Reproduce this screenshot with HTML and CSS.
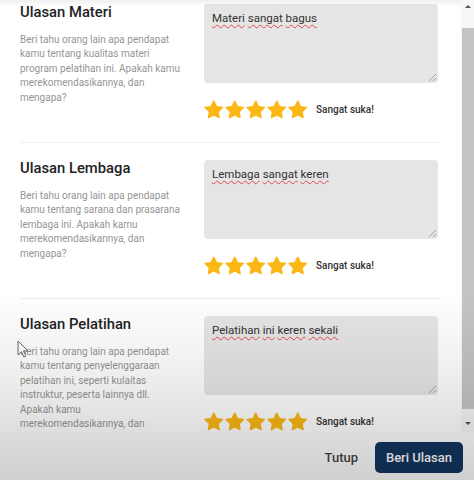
FILE: index.html
```html
<!DOCTYPE html>
<html lang="id">
<head>
    <meta charset="UTF-8">
    <meta name="viewport" content="width=device-width, initial-scale=1.0">
    <title>Beri Ulasan</title>
    <link rel="stylesheet" href="styles.css">
</head>
<body>
    <svg width="0" height="0" style="position:absolute">
        <symbol id="star" viewBox="1.6 2 20.8 19.6">
            <path d="M12 2.9l2.9 5.8 6.4.95-4.65 4.5 1.1 6.4L12 17.5l-5.75 3.05 1.1-6.4L2.7 9.65l6.4-.95z"/>
        </symbol>
    </svg>

    <div class="modal">
        <div class="modal-body">
            <div class="reviews">
                <div class="review-list">
                    <section class="review">
                        <div class="info">
                            <h2>Ulasan Materi</h2>
                            <p>Beri tahu orang lain apa pendapat kamu tentang kualitas materi program pelatihan ini. Apakah kamu merekomendasikannya, dan mengapa?</p>
                        </div>
                        <div class="answer">
                            <div class="field"><span class="typo">Materi</span> <span class="typo">sangat</span> <span class="typo">bagus</span></div>
                            <div class="rating">
                                <svg class="star"><use href="#star"/></svg>
                                <svg class="star"><use href="#star"/></svg>
                                <svg class="star"><use href="#star"/></svg>
                                <svg class="star"><use href="#star"/></svg>
                                <svg class="star"><use href="#star"/></svg>
                                <span class="rating-label">Sangat suka!</span>
                            </div>
                        </div>
                    </section>

                    <section class="review">
                        <div class="info">
                            <h2>Ulasan Lembaga</h2>
                            <p>Beri tahu orang lain apa pendapat kamu tentang sarana dan prasarana lembaga ini. Apakah kamu merekomendasikannya, dan mengapa?</p>
                        </div>
                        <div class="answer">
                            <div class="field"><span class="typo">Lembaga</span> <span class="typo">sangat</span> <span class="typo">keren</span></div>
                            <div class="rating">
                                <svg class="star"><use href="#star"/></svg>
                                <svg class="star"><use href="#star"/></svg>
                                <svg class="star"><use href="#star"/></svg>
                                <svg class="star"><use href="#star"/></svg>
                                <svg class="star"><use href="#star"/></svg>
                                <span class="rating-label">Sangat suka!</span>
                            </div>
                        </div>
                    </section>

                    <section class="review">
                        <div class="info">
                            <h2>Ulasan Pelatihan</h2>
                            <p>Beri tahu orang lain apa pendapat kamu tentang penyelenggaraan pelatihan ini, seperti kulaitas instruktur, peserta lainnya dll. Apakah kamu merekomendasikannya, dan mengapa?</p>
                        </div>
                        <div class="answer">
                            <div class="field"><span class="typo">Pelatihan</span> <span class="typo">ini</span> <span class="typo">keren</span> <span class="typo">sekali</span></div>
                            <div class="rating">
                                <svg class="star"><use href="#star"/></svg>
                                <svg class="star"><use href="#star"/></svg>
                                <svg class="star"><use href="#star"/></svg>
                                <svg class="star"><use href="#star"/></svg>
                                <svg class="star"><use href="#star"/></svg>
                                <span class="rating-label">Sangat suka!</span>
                            </div>
                        </div>
                    </section>
                </div>
            </div>
            <div class="scrollbar">
                <span class="arrow up"></span>
                <div class="track"><div class="thumb"></div></div>
                <span class="arrow down"></span>
            </div>
        </div>
        <footer class="modal-footer">
            <button class="btn-link">Tutup</button>
            <button class="btn-primary">Beri Ulasan</button>
        </footer>
    </div>

    <!-- mouse pointer -->
    <svg class="pointer" width="12" height="18" viewBox="0 0 12 18">
        <path d="M1 1v14l3.5-3.3 2.4 5.3 2-.9-2.4-5.2H11z" fill="#f4f4f4" stroke="#666" stroke-width="1" stroke-linejoin="round"/>
    </svg>
</body>
</html>
```

FILE: styles.css
```css
body {
    margin: 0;
    font-family: Roboto, 'Noto Sans', sans-serif;
    background: #fff;
    color: #333;
    width: 474px;
    height: 480px;
    overflow: hidden;
    position: relative;
}
/* dim band over the lower part of the page */
body::after {
    content: "";
    position: absolute;
    inset: 0;
    pointer-events: none;
    background: linear-gradient(to bottom, rgba(0, 0, 0, 0) 0, rgba(0, 0, 0, 0) 290px, rgba(0, 0, 0, 0.07) 380px, rgba(0, 0, 0, 0.19) 480px);
}
.modal {
    display: flex;
    flex-direction: column;
    height: 480px;
}
.modal-body {
    display: flex;
    height: 432px;
    position: relative;
}
.modal-body::before {
    content: "";
    position: absolute;
    left: 0;
    right: 13px;
    top: 0;
    height: 7px;
    background: linear-gradient(to bottom, rgba(0, 0, 0, 0.06), rgba(0, 0, 0, 0));
    z-index: 2;
}
.reviews {
    flex: 1;
    overflow: hidden;
    padding: 0 21px 0 20px;
}
.review-list {
    margin-top: -13px;
}
.review {
    display: grid;
    grid-template-columns: 165px 1fr;
    column-gap: 19px;
    padding: 17px 0 23px;
    border-bottom: 1px solid #efefef;
}
.info h2 {
    margin: -1px 0 0;
    font-size: 14.8px;
    line-height: 18px;
    font-weight: 500;
    color: #222;
}
.info p {
    margin: 12px 0 0;
    font-size: 10px;
    line-height: 14.4px;
    color: #959595;
}
.field {
    position: relative;
    box-sizing: border-box;
    width: 234px;
    height: 79px;
    padding: 6px 8px;
    background: #e5e5e5;
    border-radius: 4px;
    font-size: 11.5px;
    line-height: 16px;
    color: #333;
}
/* resize grip */
.field::after {
    content: "";
    position: absolute;
    right: 2px;
    bottom: 2px;
    width: 7px;
    height: 7px;
    background: linear-gradient(135deg, transparent 0 48%, #a0a0a0 48% 56%, transparent 56% 74%, #a0a0a0 74% 82%, transparent 82%);
}
.typo {
    text-decoration: underline wavy #e0454f;
    text-decoration-thickness: 1px;
    text-underline-offset: 2px;
}
.rating {
    display: flex;
    align-items: center;
    gap: 1.5px;
    margin-top: 17px;
}
.star {
    width: 19.5px;
    height: 19px;
    fill: #fbb714;
    stroke: #fbb714;
    stroke-width: 1.4;
    stroke-linejoin: round;
    overflow: visible;
}
.rating-label {
    margin-left: 7px;
    font-size: 10px;
    font-weight: 500;
    color: #333;
}
.scrollbar {
    width: 13px;
    display: flex;
    flex-direction: column;
    background: #f7f7f7;
}
.arrow {
    height: 17px;
    display: flex;
    align-items: center;
    justify-content: center;
}
.arrow::before {
    content: "";
    border-left: 3px solid transparent;
    border-right: 3px solid transparent;
}
.arrow.up::before {
    border-bottom: 3px solid #555;
    margin-bottom: 4px;
}
.arrow.down::before {
    border-top: 3px solid #555;
}
.track {
    flex: 1;
    padding: 11px 0 6px 1px;
}
.thumb {
    height: 100%;
    background: #c4c4c4;
}
.modal-footer {
    flex: 1;
    display: flex;
    justify-content: flex-end;
    align-items: center;
    padding: 3px 11px 0 0;
}
button {
    font-family: inherit;
    font-size: 13px;
    font-weight: 500;
    border: none;
    cursor: pointer;
}
.btn-link {
    background: none;
    color: #444;
    padding: 0 8px;
    margin-right: 9px;
}
.btn-primary {
    width: 88px;
    height: 31px;
    background: #11365f;
    color: #fff;
    border-radius: 5px;
    padding: 0;
}
.pointer {
    position: absolute;
    left: 17px;
    top: 340px;
    z-index: 3;
}
```
